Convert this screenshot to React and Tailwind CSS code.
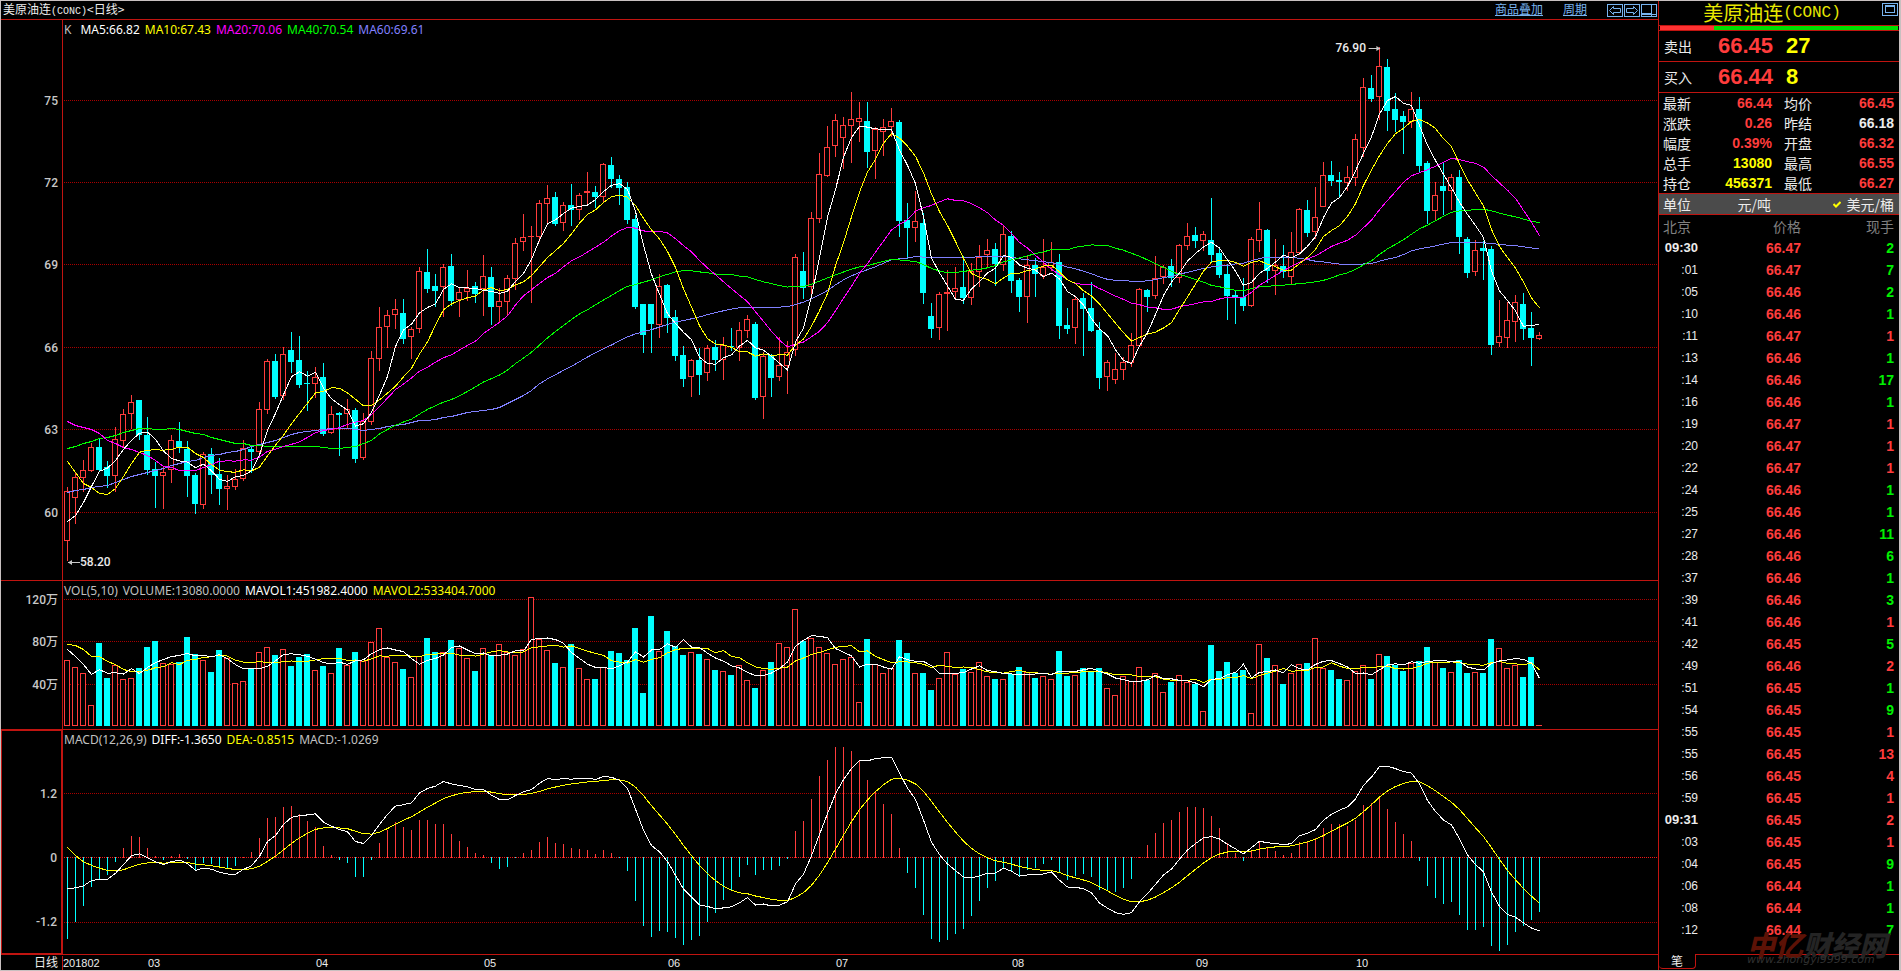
import React from "react";

const STEP = 8;
const FIRST_X = 67;
const LEFT = 63;
const WIDTH = 1595;

// One row per trading day: high, body top, body bottom, low, volume top, rising (1) or falling (0).
const DAYS = [
  [487, 491, 541, 561, 660, 1], [473, 477, 498, 524, 667, 1], [460, 470, 478, 492, 673, 1], [443, 447, 471, 472, 705, 1],
  [438, 447, 470, 472, 643, 0], [461, 467, 476, 488, 678, 0], [427, 439, 476, 492, 665, 1], [409, 414, 441, 447, 679, 1],
  [395, 402, 414, 429, 678, 1], [400, 400, 435, 440, 668, 0], [417, 435, 470, 475, 647, 0], [462, 469, 476, 508, 641, 0],
  [467, 472, 476, 509, 663, 1], [435, 440, 470, 483, 664, 1], [422, 441, 447, 453, 662, 0], [441, 449, 476, 497, 637, 0],
  [473, 475, 504, 514, 654, 0], [452, 454, 505, 509, 660, 1], [448, 454, 475, 494, 672, 0], [458, 474, 489, 505, 650, 0],
  [475, 486, 489, 510, 658, 1], [469, 479, 487, 490, 683, 1], [440, 448, 479, 481, 681, 1], [445, 449, 452, 473, 669, 0],
  [402, 409, 452, 455, 652, 1], [359, 361, 410, 414, 647, 1], [354, 361, 397, 399, 655, 0], [347, 354, 396, 400, 649, 1],
  [332, 350, 362, 373, 666, 0], [336, 360, 385, 388, 657, 0], [371, 383, 384, 411, 654, 0], [367, 377, 384, 398, 670, 1],
  [363, 377, 434, 436, 666, 0], [406, 414, 433, 434, 673, 1], [412, 413, 415, 456, 648, 0], [399, 409, 414, 428, 665, 1],
  [408, 410, 459, 463, 652, 0], [413, 421, 458, 460, 661, 1], [351, 358, 422, 425, 642, 1], [307, 327, 359, 371, 628, 1],
  [310, 315, 327, 348, 657, 1], [299, 309, 315, 329, 662, 1], [299, 313, 339, 344, 669, 0], [327, 329, 337, 359, 677, 1],
  [267, 271, 329, 333, 656, 1], [249, 272, 289, 293, 638, 0], [274, 286, 291, 307, 652, 0], [264, 267, 287, 317, 652, 1],
  [254, 266, 301, 306, 640, 0], [288, 292, 300, 317, 648, 1], [270, 288, 292, 301, 658, 1], [282, 286, 294, 303, 671, 0],
  [255, 276, 289, 316, 648, 1], [267, 277, 307, 325, 655, 0], [288, 301, 307, 322, 644, 1], [275, 278, 302, 316, 652, 1],
  [238, 243, 279, 290, 655, 1], [214, 237, 242, 251, 649, 1], [226, 236, 237, 303, 597, 1], [200, 203, 237, 242, 639, 1],
  [185, 198, 204, 224, 650, 1], [192, 197, 224, 226, 663, 0], [202, 205, 223, 231, 667, 1], [184, 205, 210, 226, 644, 0],
  [193, 195, 210, 220, 668, 1], [172, 191, 193, 204, 679, 1], [186, 192, 197, 208, 679, 0], [163, 164, 197, 202, 667, 1],
  [157, 165, 179, 188, 651, 0], [175, 179, 188, 205, 653, 0], [182, 187, 220, 224, 660, 0], [215, 219, 307, 309, 628, 0],
  [304, 304, 335, 353, 693, 0], [304, 304, 324, 353, 616, 0], [274, 286, 325, 338, 651, 1], [284, 285, 318, 333, 631, 0],
  [310, 317, 356, 361, 646, 0], [346, 355, 379, 387, 655, 0], [359, 360, 377, 397, 652, 1], [348, 360, 375, 395, 654, 0],
  [345, 348, 373, 381, 659, 1], [340, 347, 360, 371, 670, 0], [337, 345, 360, 380, 671, 1], [328, 346, 347, 351, 675, 0],
  [322, 330, 348, 361, 665, 1], [315, 319, 331, 338, 680, 1], [322, 324, 398, 400, 688, 0], [352, 356, 397, 419, 670, 1],
  [354, 355, 378, 397, 662, 0], [337, 365, 377, 381, 643, 1], [341, 352, 366, 394, 647, 1], [254, 257, 350, 356, 609, 1],
  [252, 271, 288, 299, 641, 0], [212, 218, 287, 297, 638, 1], [153, 174, 219, 223, 647, 1], [126, 147, 176, 177, 653, 1],
  [114, 120, 146, 157, 664, 1], [117, 125, 138, 169, 659, 1], [92, 119, 126, 163, 657, 1], [102, 118, 122, 142, 702, 1],
  [102, 121, 152, 168, 639, 0], [127, 129, 151, 179, 664, 1], [119, 127, 132, 156, 673, 1], [108, 121, 127, 137, 668, 1],
  [120, 122, 221, 237, 640, 0], [203, 220, 228, 259, 653, 0], [191, 221, 228, 242, 673, 1], [213, 223, 293, 304, 673, 0],
  [303, 316, 329, 338, 690, 0], [292, 294, 328, 340, 678, 1], [270, 292, 294, 331, 652, 1], [267, 288, 292, 300, 674, 1],
  [256, 287, 298, 304, 669, 0], [263, 271, 298, 305, 672, 1], [245, 257, 272, 287, 662, 1], [239, 250, 255, 267, 676, 1],
  [243, 249, 264, 286, 679, 0], [226, 234, 265, 271, 679, 1], [231, 236, 281, 293, 674, 0], [278, 280, 297, 312, 667, 0],
  [255, 265, 297, 323, 672, 1], [258, 265, 274, 297, 678, 0], [239, 267, 276, 279, 676, 1], [242, 262, 268, 271, 679, 1],
  [254, 262, 326, 339, 651, 0], [308, 325, 329, 334, 676, 0], [297, 299, 328, 344, 675, 1], [293, 298, 309, 356, 668, 0],
  [282, 308, 331, 332, 671, 0], [322, 330, 378, 389, 668, 0], [360, 362, 377, 391, 688, 1], [353, 369, 380, 384, 695, 1],
  [357, 362, 370, 380, 676, 1], [333, 345, 363, 367, 681, 1], [288, 289, 346, 347, 667, 1], [289, 290, 297, 312, 680, 0],
  [256, 278, 296, 299, 673, 1], [265, 267, 277, 284, 692, 1], [259, 266, 278, 287, 682, 0], [244, 245, 278, 283, 675, 1],
  [223, 236, 246, 250, 682, 1], [227, 235, 241, 248, 684, 0], [231, 234, 241, 251, 711, 1], [198, 240, 255, 262, 645, 0],
  [248, 253, 275, 278, 671, 0], [264, 274, 296, 320, 662, 0], [291, 295, 297, 324, 673, 0], [278, 297, 306, 311, 670, 0],
  [237, 239, 306, 307, 713, 1], [202, 229, 241, 252, 644, 1], [229, 230, 271, 283, 658, 0], [239, 265, 271, 295, 665, 1],
  [245, 266, 272, 278, 684, 0], [232, 252, 277, 284, 673, 1], [208, 209, 253, 255, 664, 1], [200, 210, 233, 237, 663, 0],
  [187, 217, 232, 239, 638, 1], [162, 175, 207, 207, 668, 1], [161, 175, 181, 186, 670, 0], [172, 180, 182, 197, 679, 0],
  [166, 177, 183, 191, 680, 1], [134, 139, 178, 186, 671, 1], [78, 87, 148, 157, 665, 1], [75, 88, 99, 102, 679, 0],
  [47, 66, 97, 120, 654, 1], [59, 67, 111, 131, 656, 0], [93, 109, 120, 132, 665, 0], [111, 116, 122, 154, 671, 0],
  [92, 109, 122, 128, 663, 1], [97, 109, 166, 173, 661, 0], [161, 163, 211, 224, 647, 0], [182, 195, 211, 221, 662, 1],
  [163, 186, 191, 215, 668, 0], [174, 177, 191, 210, 672, 1], [170, 177, 237, 254, 660, 0], [237, 239, 273, 278, 673, 0],
  [240, 250, 272, 276, 672, 1], [241, 248, 251, 280, 673, 0], [246, 249, 345, 355, 639, 0], [300, 336, 343, 347, 648, 1],
  [302, 320, 338, 348, 668, 1], [295, 302, 322, 342, 665, 1], [293, 304, 329, 340, 677, 0], [312, 328, 338, 366, 657, 0],
  [332, 335, 339, 340, 725, 1],
];

const UP = "#ff3c3c";
const DOWN = "#00ffff";

const closes = DAYS.map((d) => (d[5] ? d[1] + 0.5 : d[2] - 0.5));
const volumes = DAYS.map((d) => d[4]);

// Leading values of each average, for the days before its first full window.
const LEAD = {
  ma5: [521, 515, 502, 486],
  ma10: [461, 472, 483, 487, 493, 494, 488, 476, 463],
  ma20: [421, 425, 427, 429, 433, 440, 443, 447, 449, 452, 455, 460, 466, 467, 470, 470, 470, 467, 464],
  ma40: [
    448, 446, 443, 441, 438, 437, 435, 432, 430, 428, 428, 429, 429, 428, 429, 431, 433, 434, 437, 439, 441, 443, 443,
    445, 445, 446, 446, 446, 446, 446, 446, 446, 447, 448, 448, 447, 446, 443, 440,
  ],
  ma60: [
    492, 490, 489, 487, 486, 485, 482, 479, 476, 474, 472, 470, 468, 465, 463, 461, 460, 457, 455, 454, 452, 451, 449,
    446, 444, 442, 440, 437, 434, 432, 431, 430, 429, 428, 428, 428, 429, 430, 429, 428, 426, 425, 424, 422, 420, 420,
    419, 417, 416, 414, 412, 411, 410, 409, 407, 403, 399, 395, 390,
  ],
  vol5: [649, 656, 664, 674],
  vol10: [644, 645, 649, 656, 656, 661, 664, 669, 671],
};

function average(values, span, lead) {
  return values.map((_, i) => {
    if (i < span - 1) return lead[i] + 0.5;
    let sum = 0;
    for (let k = i - span + 1; k <= i; k++) sum += values[k];
    return sum / span;
  });
}

const PRICE_PX = 27.47;
const MACD_PX = 53.75;
const MACD_ZERO = 857.5;

function macd() {
  let slow = 451;
  let fast = slow + 0.577 * PRICE_PX;
  let dea = 0.186;
  return closes.map((c, i) => {
    if (i > 0) {
      fast += (c - fast) * (2 / 13);
      slow += (c - slow) * (2 / 27);
    }
    const diff = (slow - fast) / PRICE_PX;
    if (i > 0) dea += (diff - dea) * 0.2;
    return { diff, dea, bar: 2 * (diff - dea) };
  });
}

const MACD = macd();

const xAt = (i) => FIRST_X + i * STEP;
const points = (ys) => ys.map((y, i) => `${xAt(i) + 0.5},${y.toFixed(1)}`).join(" ");

function Line({ ys, color }) {
  return <polyline points={points(ys)} fill="none" stroke={color} strokeWidth="1" />;
}

function Grid({ rows }) {
  return rows.map(([y, , color]) => (
    <line key={y} x1="64" x2="1658" y1={y + 0.5} y2={y + 0.5} stroke={color || "#a80000"} strokeDasharray="1 1" />
  ));
}

function Body({ i, top, bottom, up }) {
  const x = xAt(i) - 3;
  if (!up || bottom - top < 3) {
    return <rect x={x} y={top} width="6" height={bottom - top} fill={up ? UP : DOWN} />;
  }
  return <rect x={x + 0.5} y={top + 0.5} width="5" height={bottom - top - 1} fill="#000" stroke={UP} />;
}

function Panel({ className, top, height, rows, labels, axisClass, children, overlay }) {
  const pct = (y) => `${((y - top) / height) * 100}%`;
  return (
    <section className={`flex min-h-0 basis-0 border-b border-[#c01410] ${className}`}>
      <div className={`relative w-[62px] shrink-0 border-r border-[#c01410] ${axisClass || ""}`}>
        {rows.map(([y, text]) => (
          <span
            key={y}
            className="absolute right-1 -translate-y-1/2 text-xs font-medium leading-4 text-[#c8c8c8]"
            style={{ top: pct(y + 1) }}
          >
            {text}
          </span>
        ))}
      </div>
      <div className="relative min-w-0 flex-1">
        <svg
          className="absolute inset-0 h-full w-full"
          viewBox={`${LEFT} ${top} ${WIDTH} ${height}`}
          preserveAspectRatio="none"
          shapeRendering="crispEdges"
        >
          <Grid rows={rows} />
          {children}
        </svg>
        <p className="absolute left-px top-0.5 flex gap-[5px] whitespace-nowrap font-['Noto_Sans',sans-serif] text-xs leading-4">
          {labels.map(([text, color]) => (
            <span key={text} className={color}>
              {text}
            </span>
          ))}
        </p>
        {overlay}
      </div>
    </section>
  );
}

const PRICE_ROWS = [[100, "75"], [182, "72"], [264, "69"], [347, "66"], [429, "63"], [512, "60"]];
const VOLUME_ROWS = [[599, "120万"], [641, "80万"], [684, "40万"]];
const MACD_ROWS = [[793, "1.2"], [857, "0", "#f01818"], [922, "-1.2"]];

const MONTHS = [["201802", 85], ["03", 168], ["04", 168], ["05", 184], ["06", 168], ["07", 176], ["08", 184], ["09", 160], ["10", 160]];

const place = (x, y) => ({ left: `${((x - LEFT) / WIDTH) * 100}%`, top: `${((y - 20) / 560) * 100}%` });

function Arrow({ flip }) {
  return (
    <svg width="12" height="7" viewBox="0 0 12 7" className={flip ? "rotate-180" : ""} fill="#c8c8c8">
      <path d="M0 3h12v1H0zM8 1l4 2.5L8 6z" />
    </svg>
  );
}

function ToolIcon({ label, children }) {
  return (
    <button type="button" aria-label={label} className="block">
      <svg width="16" height="13" viewBox="0 0 16 13" fill="none" stroke="#78b4f0" shapeRendering="crispEdges">
        <rect x="0.5" y="0.5" width="15" height="12" />
        {children}
      </svg>
    </button>
  );
}

const QUOTE = [
  ["最新", "66.44", "text-[#ff3c3c]", "均价", "66.45", "text-[#ff3c3c]"],
  ["涨跌", "0.26", "text-[#ff3c3c]", "昨结", "66.18", "text-[#ececec]"],
  ["幅度", "0.39%", "text-[#ff3c3c]", "开盘", "66.32", "text-[#ff3c3c]"],
  ["总手", "13080", "text-[#ffff00]", "最高", "66.55", "text-[#ff3c3c]"],
  ["持仓", "456371", "text-[#ffff00]", "最低", "66.27", "text-[#ff3c3c]"],
];

// time, price, lots, traded at the ask (1) or at the bid (0)
const TICKS = [
  ["09:30", "66.47", 2, 0], [":01", "66.47", 7, 0], [":05", "66.46", 2, 0], [":10", "66.46", 1, 0],
  [":11", "66.47", 1, 1], [":13", "66.46", 1, 0], [":14", "66.46", 17, 0], [":16", "66.46", 1, 0],
  [":19", "66.47", 1, 1], [":20", "66.47", 1, 1], [":22", "66.47", 1, 1], [":24", "66.46", 1, 0],
  [":25", "66.46", 1, 0], [":27", "66.46", 11, 0], [":28", "66.46", 6, 0], [":37", "66.46", 1, 0],
  [":39", "66.46", 3, 0], [":41", "66.46", 1, 1], [":42", "66.45", 5, 0], [":49", "66.46", 2, 1],
  [":51", "66.45", 1, 0], [":54", "66.45", 9, 0], [":55", "66.45", 1, 1], [":55", "66.45", 13, 1],
  [":56", "66.45", 4, 1], [":59", "66.45", 1, 1], ["09:31", "66.45", 2, 1], [":03", "66.45", 1, 1],
  [":04", "66.45", 9, 0], [":06", "66.44", 1, 0], [":08", "66.44", 1, 0], [":12", "66.44", 7, 0],
];

function Charts() {
  return (
    <main className="flex min-w-0 flex-1 flex-col border-r border-[#c01410] font-[Roboto,'Noto_Sans_CJK_SC',sans-serif]">
      <header className="flex h-[19px] shrink-0 items-center border-b border-[#c01410] pl-0.5 text-xs">
        <h1 className="flex-1 font-['Noto_Sans_CJK_SC',sans-serif] leading-4 text-[#ececec]">
          美原油连<span className="font-['Liberation_Mono',monospace] text-[10px]">(CONC)</span>&lt;日线&gt;
        </h1>
        <nav className="flex items-center pr-px text-[#78b4f0]">
          <a href="#overlay" className="mr-5 leading-4 underline">商品叠加</a>
          <a href="#period" className="mr-5 leading-4 underline">周期</a>
          <span className="flex gap-px">
            <ToolIcon label="左移">
              <path d="M2.5 6.5l4-4v2h7v4h-7v2z" shapeRendering="auto" />
            </ToolIcon>
            <ToolIcon label="右移">
              <path d="M13.5 6.5l-4-4v2h-7v4h7v2z" shapeRendering="auto" />
            </ToolIcon>
            <ToolIcon label="分栏">
              <path d="M10.5 0v13M1 9.5h9M1 10.5h14" />
            </ToolIcon>
          </span>
        </nav>
      </header>

      <Panel
        className="grow-[560]"
        top={20}
        height={560}
        rows={PRICE_ROWS}
        labels={[
          ["K", "mr-1 text-[#c0c0c0]"],
          ["MA5:66.82", "text-white"],
          ["MA10:67.43", "text-[#ffff00]"],
          ["MA20:70.06", "text-[#ff00ff]"],
          ["MA40:70.54", "text-[#00ff00]"],
          ["MA60:69.61", "text-[#8080ff]"],
        ]}
        overlay={
          <>
            <span
              className="absolute flex -translate-x-full -translate-y-1/2 items-center gap-0.5 text-xs font-medium leading-4 text-[#ececec]"
              style={place(1380, 48)}
            >
              76.90
              <Arrow />
            </span>
            <span
              className="absolute flex -translate-y-1/2 items-center text-xs font-medium leading-4 text-[#ececec]"
              style={place(68, 562)}
            >
              <Arrow flip />
              58.20
            </span>
          </>
        }
      >
        {DAYS.map(([high, top, bottom, low, , up], i) => (
          <g key={i}>
            <rect x={xAt(i)} y={high} width="1" height={low - high} fill={up ? UP : DOWN} />
            <Body i={i} top={top} bottom={bottom} up={up} />
          </g>
        ))}
        <Line ys={average(closes, 60, LEAD.ma60)} color="#8080ff" />
        <Line ys={average(closes, 40, LEAD.ma40)} color="#00ff00" />
        <Line ys={average(closes, 20, LEAD.ma20)} color="#ff00ff" />
        <Line ys={average(closes, 10, LEAD.ma10)} color="#ffff00" />
        <Line ys={average(closes, 5, LEAD.ma5)} color="#ffffff" />
      </Panel>

      <Panel
        className="grow-[148]"
        top={581}
        height={148}
        rows={VOLUME_ROWS}
        labels={[
          ["VOL(5,10)", "text-[#c0c0c0]"],
          ["VOLUME:13080.0000", "text-[#c0c0c0]"],
          ["MAVOL1:451982.4000", "text-white"],
          ["MAVOL2:533404.7000", "text-[#ffff00]"],
        ]}
      >
        {DAYS.map((d, i) => (
          <Body key={i} i={i} top={d[4]} bottom={726} up={d[5]} />
        ))}
        <Line ys={average(volumes, 10, LEAD.vol10)} color="#ffff00" />
        <Line ys={average(volumes, 5, LEAD.vol5)} color="#ffffff" />
      </Panel>

      <Panel
        className="grow-[224]"
        axisClass="border-y border-r-2 border-l"
        top={730}
        height={224}
        rows={MACD_ROWS}
        labels={[
          ["MACD(12,26,9)", "text-[#c0c0c0]"],
          ["DIFF:-1.3650", "text-white"],
          ["DEA:-0.8515", "text-[#ffff00]"],
          ["MACD:-1.0269", "text-[#c0c0c0]"],
        ]}
      >
        {MACD.map(({ bar }, i) => {
          const h = Math.max(1, Math.round(Math.abs(bar) * MACD_PX));
          return (
            <rect key={i} x={xAt(i)} y={bar > 0 ? 858 - h : 857} width="1" height={h} fill={bar > 0 ? UP : DOWN} />
          );
        })}
        <Line ys={MACD.map((m) => MACD_ZERO - m.dea * MACD_PX)} color="#ffff00" />
        <Line ys={MACD.map((m) => MACD_ZERO - m.diff * MACD_PX)} color="#ffffff" />
      </Panel>

      <footer className="flex h-[15px] shrink-0 items-center text-xs leading-[14px] text-[#ececec]">
        <span className="w-[62px] shrink-0 border-r border-[#c01410] pr-1 text-right">日线</span>
        <ol className="flex min-w-0 flex-1 font-['Liberation_Sans',sans-serif] text-[11px]">
          {MONTHS.map(([name, w]) => (
            <li key={name} className="shrink-0" style={{ width: `${(w / WIDTH) * 100}%` }}>
              {name}
            </li>
          ))}
        </ol>
      </footer>
    </main>
  );
}

function Side() {
  return (
    <aside className="relative flex w-[240px] shrink-0 flex-col text-sm text-[#ececec]">
      <header className="relative flex h-6 items-center justify-center pr-3.5">
        <h2 className="flex items-center whitespace-nowrap text-xl leading-6 text-[#e8e800]">
          美原油连<span className="font-['Liberation_Mono',monospace] text-base leading-6">(CONC)</span>
        </h2>
        <button type="button" aria-label="窗口" className="absolute right-px top-0.5">
          <svg width="16" height="13" viewBox="0 0 16 13" fill="none" stroke="#78b4f0" shapeRendering="crispEdges">
            <rect x="0.5" y="0.5" width="15" height="12" />
            <path d="M3.5 2.5h9v7h-9zM3 3.5h10" />
          </svg>
        </button>
      </header>
      <div className="flex h-1.5 border-y border-[#c01410] pl-px pr-px">
        <div className="w-[54px] bg-[#ff3232]" />
        <div className="flex-1 bg-[#00e000]" />
      </div>
      {[["卖出", "66.45", "27"], ["买入", "66.44", "8"]].map(([label, price, lots]) => (
        <div key={label} className="flex h-[31px] items-center border-b border-[#c01410] pl-[5px]">
          <span className="w-[54px]">{label}</span>
          <b className="w-[68px] font-['Liberation_Sans',sans-serif] text-[22px] text-[#ff3c3c]">{price}</b>
          <b className="font-['Liberation_Sans',sans-serif] text-[22px] text-[#ffff00]">{lots}</b>
        </div>
      ))}
      <dl className="border-b border-[#c01410]">
        {QUOTE.map(([a, av, ac, b, bv, bc]) => (
          <div key={a} className="flex h-5 items-center leading-[18px]">
            <dt className="w-10 pl-1">{a}</dt>
            <dd className={`w-[73px] text-right font-['Liberation_Sans',sans-serif] font-bold ${ac}`}>{av}</dd>
            <dt className="pl-3">{b}</dt>
            <dd className={`flex-1 pr-[5px] text-right font-['Liberation_Sans',sans-serif] font-bold ${bc}`}>{bv}</dd>
          </div>
        ))}
      </dl>
      <div className="flex h-[21px] items-center border-b border-[#c01410] bg-[#4b4b4b] pl-1 pr-[5px] leading-[18px]">
        <span className="w-10">单位</span>
        <button type="button" className="w-[68px] text-right">元/吨</button>
        <button type="button" className="flex flex-1 items-center justify-end gap-1.5">
          <svg width="8" height="7" viewBox="0 0 8 7" fill="none" stroke="#ffff00" strokeWidth="2">
            <path d="M0.5 3l2.5 2.5L7.5 1" />
          </svg>
          美元/桶
        </button>
      </div>
      <table className="w-full table-fixed border-collapse">
        <thead>
          <tr className="h-[22px] text-[#808080]">
            <th className="w-[39px] whitespace-nowrap p-0 pl-1 text-left font-normal leading-5">北京</th>
            <th className="w-[103px] p-0 text-right font-normal leading-5">价格</th>
            <th className="p-0 pr-[5px] text-right font-normal leading-5">现手</th>
          </tr>
        </thead>
        <tbody className="font-['Liberation_Sans',sans-serif] leading-5">
          {TICKS.map(([time, price, lots, ask], i) => (
            <tr key={i} className="h-[22px]">
              <td className={`p-0 text-right ${time.length > 3 ? "text-[13px] font-bold" : "text-xs"}`}>{time}</td>
              <td className="p-0 text-right font-bold text-[#ff3c3c]">{price}</td>
              <td className={`p-0 pr-[5px] text-right font-bold ${ask ? "text-[#ff3c3c]" : "text-[#00f000]"}`}>{lots}</td>
            </tr>
          ))}
        </tbody>
      </table>
      <div className="min-h-0 flex-1" />
      <div className="flex h-4 shrink-0 items-start">
        <button
          type="button"
          className="h-[15px] w-[37px] rounded-b border-b border-r border-[#c01410] text-center text-xs leading-[14px]"
        >
          笔
        </button>
        <div className="h-px flex-1 bg-[#c01410]" />
      </div>
      <div className="absolute bottom-1 right-1 w-[148px] whitespace-nowrap">
        <p className="text-[28px] font-black italic leading-5 text-[#242424]">
          <span className="text-[#5c1206]">中亿</span>财经网
        </p>
        <p className="font-['DejaVu_Sans',sans-serif] text-[11px] italic leading-3 text-[#303030]">www.zhongyi9999.com</p>
      </div>
    </aside>
  );
}

export default function App() {
  return (
    <div className="flex h-screen overflow-hidden border border-r-2 border-[#c8c0c0] bg-black font-['Noto_Sans_CJK_SC',sans-serif]">
      <Charts />
      <Side />
    </div>
  );
}
